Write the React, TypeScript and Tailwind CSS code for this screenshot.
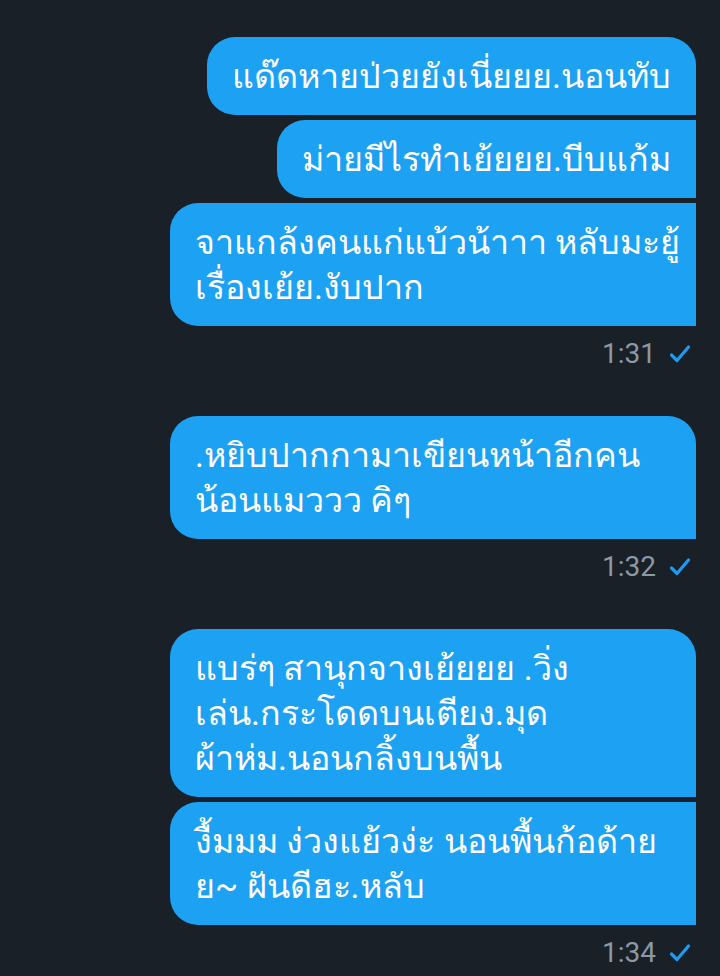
import React from 'react';

type Group = {
  time: string;
  bubbles: { lines: string[]; full?: boolean }[];
};

const GROUPS: Group[] = [
  {
    time: '1:31',
    bubbles: [
      { lines: ['แด๊ดหายป่วยยังเนี่ยยย.นอนทับ'] },
      { lines: ['ม่ายมีไรทำเย้ยยย.บีบแก้ม'] },
      { lines: ['จาแกล้งคนแก่แบ้วน้าาา หลับมะยู้', 'เรื่องเย้ย.งับปาก'], full: true },
    ],
  },
  {
    time: '1:32',
    bubbles: [{ lines: ['.หยิบปากกามาเขียนหน้าอีกคน', 'น้อนแมววว คิๆ'], full: true }],
  },
  {
    time: '1:34',
    bubbles: [
      { lines: ['แบร่ๆ สานุกจางเย้ยยย .วิ่ง', 'เล่น.กระโดดบนเตียง.มุด', 'ผ้าห่ม.นอนกลิ้งบนพื้น'], full: true },
      { lines: ['งื้มมม ง่วงแย้วง่ะ นอนพื้นก้อด้าย', 'ย~ ฝันดีฮะ.หลับ'], full: true },
    ],
  },
];

const Check = () => (
  <svg width="22" height="20" viewBox="0 0 22 20" fill="none" className="ml-[13px]">
    <path d="M2.5 11 L8 16.5 L19.5 3" stroke="#1d9bf0" strokeWidth="3.2" strokeLinecap="round" strokeLinejoin="round" />
  </svg>
);

export default function App() {
  return (
    <div className="w-[720px] h-[976px] overflow-hidden bg-[#1a2028] pt-[37px] pr-[24px] flex flex-col items-end font-['Roboto','Noto_Sans',sans-serif]">
      {GROUPS.map((group, gi) => (
        <div key={gi} className="flex flex-col items-end w-full">
          <div className="flex flex-col items-end gap-[5px] w-full">
            {group.bubbles.map((b, bi) => (
              <div
                key={bi}
                className={
                  'bg-[#1da1f2] text-white text-[34px] leading-[45px] px-[25px] py-[16.5px] rounded-l-[28px] ' +
                  (bi === 0 ? 'rounded-tr-[28px] ' : '') +
                  (b.full ? 'w-[526px]' : 'max-w-[526px]')
                }
              >
                {b.lines.map((l, li) => (
                  <div key={li} className="whitespace-nowrap">{l}</div>
                ))}
              </div>
            ))}
          </div>
          <div className="flex items-center h-[40px] mt-[8px] mb-[42px] pr-[5px] text-[28px] text-[#8b98a5]">
            <span>{group.time}</span>
            <Check />
          </div>
        </div>
      ))}
    </div>
  );
}
